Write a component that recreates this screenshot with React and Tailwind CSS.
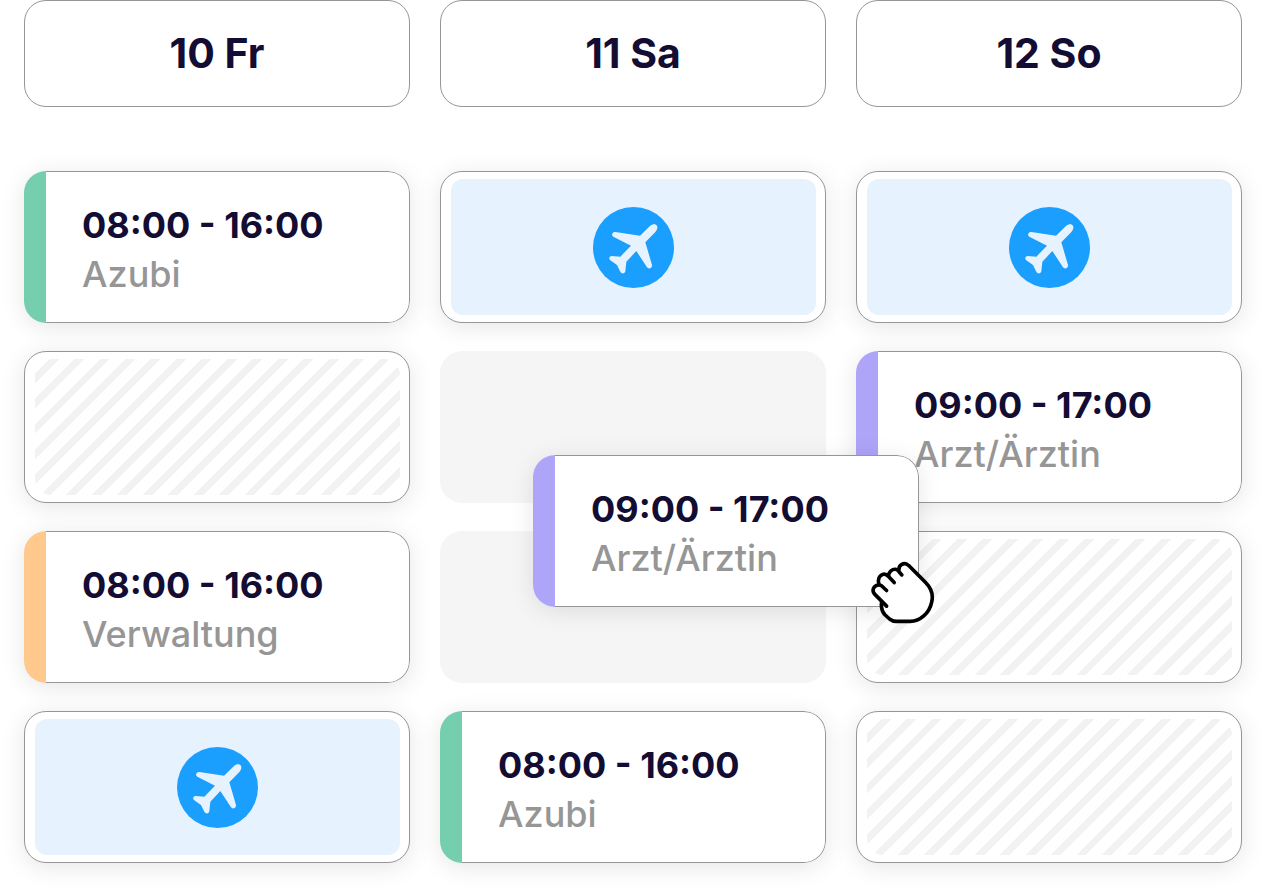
const days = ["10 Fr", "11 Sa", "12 So"];

const shifts = [
  { type: "shift", time: "08:00 - 16:00", role: "Azubi", color: "green" },
  { type: "vacation" },
  { type: "vacation" },
  { type: "blocked" },
  { type: "dragSource" },
  { type: "shift", time: "09:00 - 17:00", role: "Arzt/Ärztin", color: "purple" },
  { type: "shift", time: "08:00 - 16:00", role: "Verwaltung", color: "orange" },
  { type: "empty" },
  { type: "blocked" },
  { type: "vacation" },
  { type: "shift", time: "08:00 - 16:00", role: "Azubi", color: "green" },
  { type: "blocked" },
];

const stripColors = {
  green: "bg-[#75cead]",
  purple: "bg-[#aea4f8]",
  orange: "bg-[#ffc88d]",
};

function PlaneIcon() {
  return (
    <svg viewBox="39 33 243 243" className="size-[81px]" aria-hidden="true">
      <circle cx="160.5" cy="154.5" r="121.5" fill="#1a9fff" />
      <path
        fill="#e6f3ff"
        d="M180 119 L210 90 C217 83 226 83 230 88 C234 94 232 101 226 108 L196 139 L216 207 C217 216 206 221 201 214 L169 165 L139 197 L136 226 C134 234 125 234 121 227 L111 207 L91 193 C85 188 88 180 95 180 L121 182 L153 149 L100 122 C93 118 97 107 106 108 Z"
      />
    </svg>
  );
}

function GrabHand() {
  return (
    <svg viewBox="62 62 194 190" className="w-[65px] h-[63px]" aria-hidden="true">
      <path
        fill="#fff"
        d="M96 184 L75 162 C66 151 71 138 86 135 C82 120 86 104 101 102 C107 101 112 103 116 106 C117 94 126 86 137 87 C142 87 145 89 148 92 C147 74 163 64 177 75 L228 126 C246 144 252 166 247 186 C240 220 212 244 182 244 L140 244 C131 244 125 241 120 237 L106 224 C94 211 94 200 96 184 Z"
      />
      <g
        fill="none"
        stroke="#000"
        strokeWidth="11"
        strokeLinecap="round"
        strokeLinejoin="round"
      >
        <path d="M111 198 L75 162 C66 151 71 140 80 136 C86 134 91 134 95 136 L111 151" />
        <path d="M88 132 C83 118 89 105 101 102 C108 101 113 104 117 109 L134 127" />
        <path d="M117 105 C118 94 128 86 138 87 C143 88 146 91 149 95 L157 104" />
        <path d="M148 90 C147 74 163 64 177 75 L228 126 C246 144 252 166 247 186 C240 220 212 244 182 244 L140 244 C131 244 125 241 120 237 L106 224 C95 212 94 200 96 186" />
      </g>
    </svg>
  );
}

function ShiftCard({ time, role, color }) {
  return (
    <div className="flex h-[152px] overflow-hidden rounded-[22px] bg-white shadow-[0_4px_24px_rgba(0,0,0,0.1)]">
      <div className={`w-[22px] shrink-0 ${stripColors[color]}`} />
      <div className="flex flex-1 flex-col justify-center rounded-r-[22px] border border-l-0 border-[#969696] pl-9 pt-1">
        <p className="text-[36px] leading-[50px] font-bold whitespace-nowrap">{time}</p>
        <p className="text-[36px] leading-[48px] font-medium whitespace-nowrap text-[#969696]">
          {role}
        </p>
      </div>
    </div>
  );
}

function FramedCard({ children }) {
  return (
    <div className="flex h-[152px] rounded-[22px] border border-[#969696] bg-white py-[7px] pr-[9px] pl-[10px] shadow-[0_4px_24px_rgba(0,0,0,0.1)]">
      {children}
    </div>
  );
}

function Cell({ entry }) {
  if (entry.type === "shift") {
    return <ShiftCard {...entry} />;
  }

  if (entry.type === "vacation") {
    return (
      <FramedCard>
        <div className="flex flex-1 items-center justify-center rounded-xl bg-[#e6f3ff]">
          <PlaneIcon />
        </div>
      </FramedCard>
    );
  }

  if (entry.type === "blocked") {
    return (
      <FramedCard>
        <div className="flex-1 rounded-2xl bg-[repeating-linear-gradient(135deg,#fff_0px,#fff_10px,#f2f2f2_10px,#f2f2f2_17px,#fff_17px,#fff_18px)]" />
      </FramedCard>
    );
  }

  return (
    <div className="relative h-[152px] rounded-[22px] bg-[#f5f5f5]">
      {/* Card being dragged, floats over the grid */}
      {entry.type === "dragSource" && (
        <div className="absolute top-[104px] left-[93px] z-10 w-full">
          <ShiftCard time="09:00 - 17:00" role="Arzt/Ärztin" color="purple" />
          <div className="absolute -right-4 -bottom-[17px]">
            <GrabHand />
          </div>
        </div>
      )}
    </div>
  );
}

export default function App() {
  return (
    <main className="min-h-screen bg-white pr-[25px] pb-7 pl-6 font-['Inter',sans-serif] text-[#130c33]">
      {/* DAYS */}
      <div className="grid grid-cols-3 gap-[30px]">
        {days.map((day) => (
          <h2
            key={day}
            className="flex h-[107px] items-center justify-center rounded-[22px] border border-[#969696] text-[41px] font-bold"
          >
            {day}
          </h2>
        ))}
      </div>

      {/* SHIFTS */}
      <div className="mt-16 grid grid-cols-3 gap-x-[30px] gap-y-7">
        {shifts.map((entry, index) => (
          <Cell key={index} entry={entry} />
        ))}
      </div>
    </main>
  );
}
